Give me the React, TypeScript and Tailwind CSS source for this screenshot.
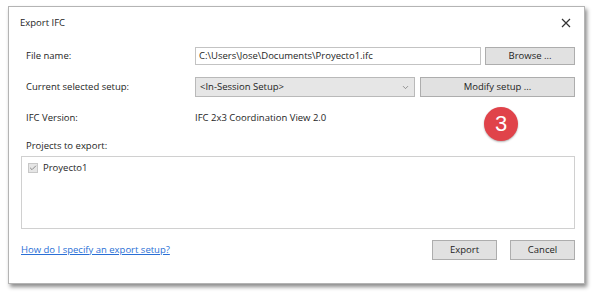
import { Check, ChevronDown } from "lucide-react"

export default function App() {
    return (
        <main className="w-[593px] h-[294px] bg-white pt-[6px] pl-[8px] font-['Open_Sans','Noto_Sans',sans-serif] text-[9.5px] text-[#1e1e1e]">
            <div className="relative w-[577px] h-[278px] bg-white border border-[#b4b4b4] shadow-[2px_3px_4px_rgba(0,0,0,0.45)] flex flex-col">
                <div className="h-[32px] flex items-center justify-between pl-[11px] pr-[13px]">
                    <span className="text-[9.5px]">Export IFC</span>
                    <svg width="10" height="10" viewBox="0 0 10 10" className="text-[#333]">
                        <path d="M1 1 L9 9 M9 1 L1 9" stroke="currentColor" strokeWidth="1.2" />
                    </svg>
                </div>

                <div className="flex flex-col pl-[12px] pr-[9px] pt-[8px]">
                    <div className="flex items-center h-[18px]">
                        <span className="w-[174px] shrink-0 pl-[5px]">File name:</span>
                        <div className="w-[286px] shrink-0 h-[18px] border border-[#c3c3c3] flex items-center px-[3px]">
                            C:\Users\Jose\Documents\Proyecto1.ifc
                        </div>
                        <button className="ml-[4px] w-[90px] shrink-0 h-[18px] bg-[#e1e1e1] border border-[#adadad] flex items-center justify-center">
                            Browse ...
                        </button>
                    </div>

                    <div className="flex items-center h-[20px] mt-[12px]">
                        <span className="w-[174px] shrink-0 pl-[5px]">Current selected setup:</span>
                        <div className="w-[220px] shrink-0 h-[20px] bg-[#e6e6e6] border border-[#b9b9b9] flex items-center justify-between px-[4px]">
                            <span>&lt;In-Session Setup&gt;</span>
                            <ChevronDown size={9} className="text-[#777]" />
                        </div>
                        <button className="ml-[5px] w-[155px] shrink-0 h-[20px] bg-[#e1e1e1] border border-[#adadad] flex items-center justify-center">
                            Modify setup ...
                        </button>
                    </div>

                    <div className="flex items-center h-[20px] mt-[11px]">
                        <span className="w-[174px] shrink-0 pl-[5px]">IFC Version:</span>
                        <span>IFC 2x3 Coordination View 2.0</span>
                    </div>

                    <div className="mt-[10px] h-[16px] flex items-center pl-[5px]">Projects to export:</div>

                    <div className="mt-[2px] w-[554px] h-[73px] border border-[#d0d0d0] px-[6px] pt-[4px]">
                        <div className="flex items-center gap-[5px]">
                            <div className="w-[10px] h-[10px] bg-[#e6e6e6] border border-[#c8c8c8] flex items-center justify-center">
                                <Check size={8} strokeWidth={3} className="text-[#8a8a8a]" />
                            </div>
                            <span>Proyecto1</span>
                        </div>
                    </div>

                    <div className="mt-[11px] flex items-center justify-between">
                        <span className="text-[#2a6fd6] underline">How do I specify an export setup?</span>
                        <div className="flex gap-[13px]">
                            <button className="w-[65px] h-[20px] bg-[#e1e1e1] border border-[#adadad] flex items-center justify-center">
                                Export
                            </button>
                            <button className="w-[65px] h-[20px] bg-[#e1e1e1] border border-[#adadad] flex items-center justify-center">
                                Cancel
                            </button>
                        </div>
                    </div>
                </div>

                <div className="absolute left-[475px] top-[100px] w-[34px] h-[34px] rounded-full bg-[#e0434a] shadow-[0_1px_2px_rgba(0,0,0,0.3)] flex items-center justify-center text-white text-[22px] leading-none font-['Liberation_Sans',sans-serif]">
                    3
                </div>
            </div>
        </main>
    )
}
